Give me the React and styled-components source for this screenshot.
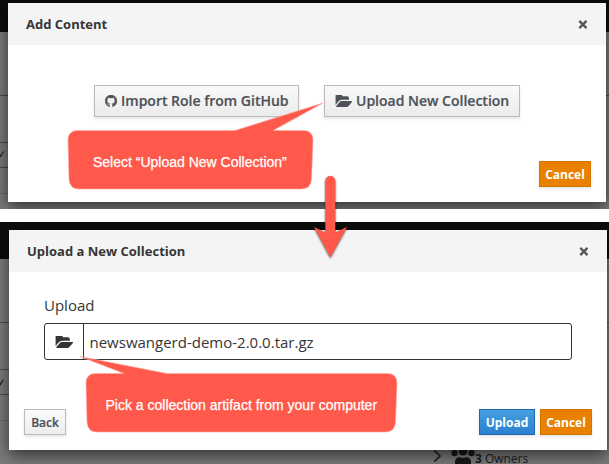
import React from 'react';
import styled, { createGlobalStyle } from 'styled-components';

const Global = createGlobalStyle`
  * { box-sizing: border-box; }
  body { margin: 0; background: #fff; overflow: hidden; font-family: "Open Sans", sans-serif; color: #363636; }
  button { font-family: inherit; margin: 0; }
  svg { display: block; flex: none; }
`;

const Guide = styled.main`
  position: relative;
  display: flex;
  flex-direction: column;
  gap: 13px;
  width: 609px;
  height: 464px;
`;

const Screen = styled.section`
  position: relative;
  height: ${p => p.$height}px;
  padding: ${p => p.$pad};
  overflow: hidden;
  background:
    linear-gradient(#0d0d0d, #0d0d0d) 0 0 / 100% ${p => p.$bar}px no-repeat,
    linear-gradient(#484848, #484848) 0 ${p => p.$bar + 63}px / 100% 1px no-repeat,
    linear-gradient(#484848, #484848) 0 ${p => p.$bar + 110}px / 9px 1px no-repeat,
    linear-gradient(#484848, #484848) 0 ${p => p.$bar + 135}px / 9px 1px no-repeat,
    linear-gradient(#686868, #686868) 0 ${p => p.$bar + 161}px / 100% 1px no-repeat,
    #7b7b7b;
`;

const Dialog = styled.div`
  position: relative;
  display: flex;
  flex-direction: column;
  width: 598px;
  height: ${p => p.$height}px;
  background: #fff;
  box-shadow: 0 5px 15px rgba(0, 0, 0, 0.6);
`;

const DialogHeader = styled.header`
  display: flex;
  align-items: center;
  justify-content: space-between;
  height: 42px;
  padding: 0 18px 0 18px;
  background: #f4f4f4;
`;

const Title = styled.h4`
  margin: 0;
  font-size: 13px;
  line-height: 18px;
  font-weight: 700;
`;

const Choices = styled.div`
  display: flex;
  justify-content: center;
  gap: 25px;
  padding: 40px 0 0;
`;

const BigButton = styled.button`
  display: flex;
  align-items: center;
  gap: 4px;
  width: ${p => p.$width}px;
  height: 32px;
  padding: 0 0 1px 10px;
  border: 1px solid #bbb;
  background: linear-gradient(#fafafa, #ebebeb);
  box-shadow: 0 2px 3px rgba(3, 3, 3, 0.1);
  color: #4d5258;
  font-size: 14px;
  font-weight: 600;
  -webkit-text-stroke: 0.2px #4d5258;
  white-space: nowrap;
`;

const tones = {
  plain: 'border-color: #bbb; background: linear-gradient(#fafafa, #ededed); color: #4d5258; -webkit-text-stroke: 0.2px #4d5258;',
  primary: 'border-color: #1f69ad; background: linear-gradient(#45a0e0, #2b80cf); color: #fff;',
  warning: 'border-color: #d27500; background: #e98000; color: #fff;',
};

const SmallButton = styled.button`
  width: ${p => p.$width}px;
  height: 26px;
  padding: 0;
  border: 1px solid;
  box-shadow: 0 2px 3px rgba(3, 3, 3, 0.1);
  font-size: 12px;
  font-weight: ${p => (p.$tone === 'plain' ? 600 : 700)};
  ${p => tones[p.$tone]}
`;

const Actions = styled.footer`
  display: flex;
  gap: 5px;
  margin-top: auto;
  padding: 0 15px 15px;
`;

const Spacer = styled.span`
  flex: 1;
`;

const Form = styled.div`
  padding: 24px 35px 0;
`;

const Label = styled.label`
  display: block;
  height: 27px;
  font-size: 15px;
  line-height: 19px;
`;

const FileField = styled.div`
  display: flex;
  height: 37px;
  border: 1px solid #333;
  border-radius: 3px;
  font-size: 15px;
`;

const Picker = styled.span`
  display: flex;
  align-items: center;
  justify-content: center;
  width: 39px;
  border-right: 1px solid #333;
`;

const FileName = styled.span`
  padding-left: 5.5px;
  line-height: 36px;
`;

const Owners = styled.div`
  display: flex;
  align-items: flex-start;
  height: 14px;
  padding-left: 424px;
  color: #191919;
  font-size: 12px;
  line-height: 18px;
`;

const OwnerCount = styled.b`
  margin: 0 3px 0 -9px;
`;

const Overlay = styled.svg`
  position: absolute;
  left: 0;
  top: 0;
  pointer-events: none;
`;

const Arrow = styled.path`
  fill: #ff594b;
  filter: drop-shadow(0 1px 1px rgba(0, 0, 0, 0.65));
`;

const CalloutText = styled.p`
  position: absolute;
  left: ${p => p.$left}px;
  top: ${p => p.$top}px;
  margin: 0;
  color: #fff;
  font: 14px/18px "Liberation Sans", sans-serif;
  -webkit-text-stroke: 0.25px #fff;
  white-space: nowrap;
`;

const GithubIcon = () => (
  <svg width="12" height="12" viewBox="128 128 1536 1536" fill="currentColor" stroke="currentColor" strokeWidth="40">
    <path d="M896 128q209 0 385.500 103t279.500 279.500 103 385.500q0 251-146.500 451.500t-378.500 277.500q-27 5-40-7t-13-30q0-3 .5-76.500t.5-134.500q0-97-52-142 57-6 102.500-18t94-39 81-66.500 53-105 20.500-150.500q0-119-79-206 37-91-8-204-28-9-81 11t-92 44l-38 24q-93-26-192-26t-192 26q-16-11-42.500-27t-83.500-38.500-85-13.500q-45 113-8 204-79 87-79 206 0 85 20.500 150t52.500 105 80.500 67 94 39 102.500 18q-39 36-49 103-21 10-45 15t-57 5-65.500-21.500-55.500-62.500q-19-32-48.500-52t-49.500-24l-20-3q-21 0-29 4.500t-5 11.500 9 14 13 12l7 5q22 10 43.500 38t31.500 51l10 23q13 38 44 61.500t67 30 69.500 7 55.500-3.500l23-4q0 38 .5 88.500t.5 54.500q0 18-13 30t-40 7q-232-77-378.500-277.500t-146.500-451.500q0-209 103-385.500t279.500-279.500 385.500-103z" />
  </svg>
);

const FolderIcon = ({ width = 17, height = 12 }) => (
  <svg width={width} height={height} viewBox="0 256 1943 1280" preserveAspectRatio="none" fill="currentColor">
    <path d="M1943 952q0 31-31 66l-336 396q-43 51-120.500 86.500t-143.500 35.500h-1088q-34 0-60.500-13t-26.500-43q0-31 31-66l336-396q43-51 120.500-86.500t143.500-35.500h1088q34 0 60.500 13t26.500 43zm-343-344v160h-832q-94 0-197 47.500t-164 119.500l-337 396-5 6q0-4-.5-12.500t-.5-12.500v-960q0-92 66-158t158-66h320q92 0 158 66t66 158v32h544q92 0 158 66t66 158z" />
  </svg>
);

const CloseIcon = () => (
  <svg width="10" height="10" viewBox="0 0 10 10" stroke="#555" strokeWidth="2.3">
    <path d="M1.3 1.900 8.500 9.100M8.500 1.900 1.300 9.100" />
  </svg>
);

const OwnersIcon = () => (
  <svg width="51" height="14" viewBox="0 0 51 14" fill="#171717">
    <path d="M1.300 0.300 7 6 1.300 11.700" fill="none" stroke="#222" strokeWidth="1.7" />
    <circle cx="21.500" cy="3" r="3.200" />
    <circle cx="38.500" cy="3" r="3.200" />
    <circle cx="30" cy="1" r="4.500" />
    <path d="M22 14v-2q0-4 4-5 4 2 8 0 4 1 4 5v2z" />
  </svg>
);

const Chevron = ({ y }) => (
  <path d={`M-1 ${y}l1.500 2.500 3-5`} fill="none" stroke="#222" strokeWidth="1.4" />
);

function Header({ title }) {
  return (
    <DialogHeader>
      <Title>{title}</Title>
      <CloseIcon />
    </DialogHeader>
  );
}

export default function App() {
  return (
    <Guide>
      <Global />
      <Screen $height={209} $bar={32} $pad="3px 0 0 8px">
        <Dialog $height={199}>
          <Header title="Add Content" />
          <Choices>
            <BigButton $width={205}><GithubIcon />Import Role from GitHub</BigButton>
            <BigButton $width={196}><FolderIcon />Upload New Collection</BigButton>
          </Choices>
          <Actions>
            <Spacer />
            <SmallButton $tone="warning" $width={52}>Cancel</SmallButton>
          </Actions>
        </Dialog>
      </Screen>
      <Screen $height={242} $bar={37} $pad="8px 0 0 9px">
        <Dialog $height={220}>
          <Header title="Upload a New Collection" />
          <Form>
            <Label>Upload</Label>
            <FileField>
              <Picker><FolderIcon width={18} height={12} /></Picker>
              <FileName>newswangerd-demo-2.0.0.tar.gz</FileName>
            </FileField>
          </Form>
          <Actions>
            <SmallButton $tone="plain" $width={42}>Back</SmallButton>
            <Spacer />
            <SmallButton $tone="primary" $width={56}>Upload</SmallButton>
            <SmallButton $tone="warning" $width={52}>Cancel</SmallButton>
          </Actions>
        </Dialog>
        <Owners><OwnersIcon /><OwnerCount>3</OwnerCount>Owners</Owners>
      </Screen>
      <Overlay width="609" height="464" viewBox="0 0 609 464">
        <Chevron y={154} />
        <Chevron y={382} />
        <g fill="#ff594b" stroke="#ffa79f" strokeWidth="0.6">
          <path d="M78 130.500H235L323 103 273 130.500H303Q313 130.500 313 140L311.500 179Q311 189 301 189H79Q69.500 189 69 179L68 140Q68 130.500 78 130.500Z" />
          <path d="M96 373.500H124L80 356.500 167 373.500H387Q397 373.500 397 383L395.500 422Q395 432 385 432H97Q87.500 432 87 422L86 383Q86 373.500 96 373.500Z" />
        </g>
        <Arrow d="M325.300 181a5 5 0 0 1 10 0V232.500L347 227 330.300 257.500 314 227 325.300 232.500Z" />
      </Overlay>
      <CalloutText $left={93} $top={153}>Select “Upload New Collection”</CalloutText>
      <CalloutText $left={105.5} $top={396}>Pick a collection artifact from your computer</CalloutText>
    </Guide>
  );
}
